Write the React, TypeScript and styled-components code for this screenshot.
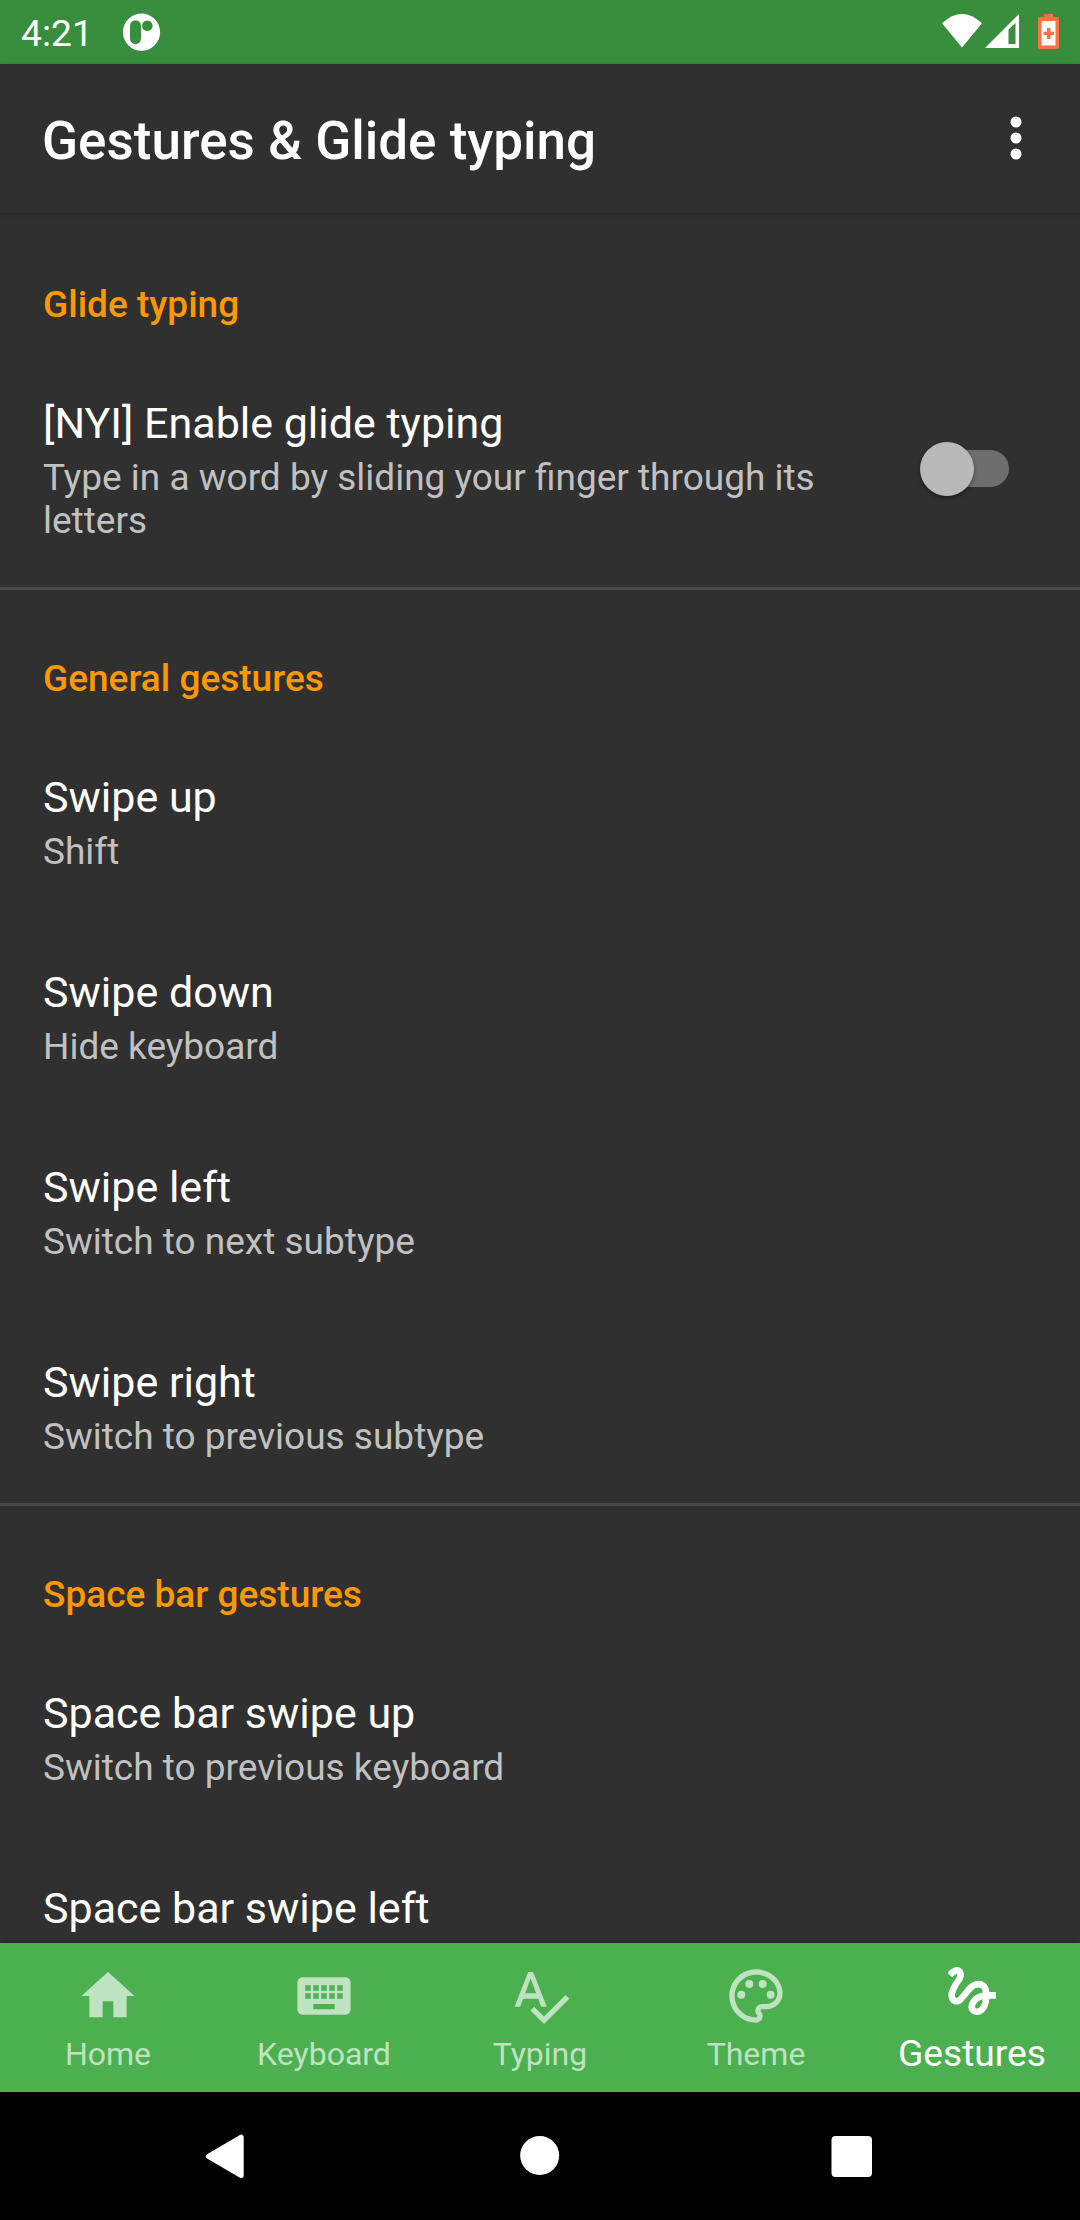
import React from "react";
import styled, { createGlobalStyle } from "styled-components";

const Global = createGlobalStyle`
  html, body { margin: 0; padding: 0; background: #303030; }
  * { box-sizing: border-box; }
`;

const Screen = styled.div`
  width: 1080px;
  height: 2220px;
  display: flex;
  flex-direction: column;
  overflow: hidden;
  background: #303030;
  color: #fff;
  font-family: Roboto, "Noto Sans", sans-serif;
`;

const StatusBar = styled.header`
  height: 64px;
  flex: none;
  display: flex;
  align-items: center;
  padding: 0 20px 0 21px;
  background: #388e3c;
`;

const Clock = styled.span`
  width: 101px;
  font-size: 37.3px;
  line-height: 44px;
  padding-top: 2px;
`;

const StatusIcons = styled.div`
  margin-left: auto;
  display: flex;
`;

const AppBar = styled.div`
  height: 149px;
  flex: none;
  display: flex;
  align-items: center;
  justify-content: space-between;
  padding: 0 42px;
  box-shadow: 0 1px 4px rgba(0, 0, 0, 0.25);
`;

const PageTitle = styled.h1`
  margin: 0;
  padding-top: 4px;
  font-size: 53px;
  line-height: 62px;
  font-weight: 500;
`;

const MenuButton = styled.button`
  display: flex;
  padding: 0;
  border: 0;
  background: none;
`;

const Content = styled.main`
  flex: 1;
  min-height: 0;
  overflow: hidden;
`;

const Section = styled.section<{ $first?: boolean }>`
  border-top: 3px solid ${(p) => (p.$first ? "transparent" : "#4a4a4a")};
`;

const SectionTitle = styled.h2`
  height: 133px;
  margin: 0;
  padding: 67px 43px 0;
  color: #ff9800;
  font-size: 37px;
  line-height: 44px;
  font-weight: 500;
`;

const Row = styled.div`
  display: flex;
  align-items: center;
  justify-content: space-between;
  padding: 49px 71px 45px 43px;
`;

const RowText = styled.div`
  display: flex;
  flex-direction: column;
  gap: 8px;
  max-width: 800px;
`;

const RowTitle = styled.span`
  font-size: 43px;
  line-height: 50px;
`;

const RowSummary = styled.span`
  font-size: 37px;
  line-height: 43px;
  color: #c1c1c1;
`;

const Track = styled.div`
  width: 86px;
  height: 37px;
  margin-bottom: 3px;
  display: flex;
  align-items: center;
  border-radius: 19px;
  background: #6e6e6e;
`;

const Thumb = styled.div`
  width: 54px;
  height: 54px;
  flex: none;
  margin-left: -3px;
  border-radius: 50%;
  background: #b9b9b9;
  box-shadow: 0 2px 4px rgba(0, 0, 0, 0.4);
`;

const BottomNav = styled.nav`
  height: 149px;
  flex: none;
  display: grid;
  grid-template-columns: repeat(5, 1fr);
  background: #4caf50;
  box-shadow: 0 -1px 6px rgba(0, 0, 0, 0.25);
`;

const Tab = styled.a<{ $active?: boolean }>`
  display: flex;
  flex-direction: column;
  align-items: center;
  justify-content: space-between;
  padding: ${(p) => (p.$active ? "16px 0 17px" : "21px 0 19px")};
  color: ${(p) => (p.$active ? "#fff" : "#bfe2c0")};
  font-size: ${(p) => (p.$active ? "37.2px" : "32px")};
  line-height: ${(p) => (p.$active ? "44px" : "38px")};
`;

const SystemNav = styled.div`
  height: 128px;
  flex: none;
  display: flex;
  align-items: center;
  justify-content: space-between;
  padding: 0 196px;
  background: #000;
`;

const Glyph = ({ d, size = 64 }: { d: string; size?: number }) => (
  <svg width={size} height={size} viewBox="0 0 24 24" fill="currentColor">
    <path d={d} fillRule="evenodd" />
  </svg>
);

const icons = {
  home: "M10 20v-6h4v6h5v-8h3L12 3 2 12h3v8z",
  keyboard:
    "M20 5H4c-1.1 0-1.99.9-1.99 2L2 17c0 1.1.9 2 2 2h16c1.1 0 2-.9 2-2V7c0-1.1-.9-2-2-2zm-9 3h2v2h-2V8zm0 3h2v2h-2v-2zM8 8h2v2H8V8zm0 3h2v2H8v-2zm-1 2H5v-2h2v2zm0-3H5V8h2v2zm9 7H8v-2h8v2zm0-4h-2v-2h2v2zm0-3h-2V8h2v2zm3 3h-2v-2h2v2zm0-3h-2V8h2v2z",
  typing:
    "M12.45 16h2.09L9.43 3H7.57L2.46 16h2.09l1.12-3h5.64l1.14 3zm-6.02-5L8.5 5.48 10.57 11H6.43zm15.16.59l-8.09 8.09L9.83 16l-1.41 1.41 5.09 5.09L23 13l-1.41-1.41z",
  theme:
    "M12 22C6.49 22 2 17.51 2 12S6.49 2 12 2s10 4.04 10 9c0 3.31-2.69 6-6 6h-1.77c-.28 0-.5.22-.5.5 0 .12.05.23.13.33.41.47.64 1.06.64 1.67A2.5 2.5 0 0112 22zm0-18c-4.41 0-8 3.59-8 8s3.59 8 8 8c.28 0 .5-.22.5-.5a.54.54 0 00-.14-.35c-.41-.46-.63-1.05-.63-1.65a2.5 2.5 0 012.5-2.5H16c2.21 0 4-1.79 4-4 0-3.86-3.59-7-8-7zM5 11.5a1.5 1.5 0 103 0a1.5 1.5 0 10-3 0zM8 7.5a1.5 1.5 0 103 0a1.5 1.5 0 10-3 0zM13 7.5a1.5 1.5 0 103 0a1.5 1.5 0 10-3 0zM16 11.5a1.5 1.5 0 103 0a1.5 1.5 0 10-3 0z",
  gesture:
    "M4.59 6.89c.7-.71 1.4-1.35 1.71-1.22.5.2 0 1.03-.3 1.52-.25.42-2.86 3.89-2.86 6.31 0 1.28.48 2.34 1.34 2.98.75.56 1.74.73 2.64.46 1.07-.31 1.95-1.4 3.06-2.77 1.21-1.49 2.83-3.44 4.08-3.44 1.63 0 1.65 1.01 1.76 1.79-3.78.64-5.38 3.67-5.38 5.37 0 1.7 1.44 3.09 3.21 3.09 1.63 0 4.29-1.33 4.69-6.1H21v-2.5h-2.47c-.15-1.65-1.09-4.2-4.03-4.2-2.25 0-4.18 1.91-4.94 2.84-.58.73-2.06 2.48-2.29 2.72-.25.3-.68.84-1.11.84-.45 0-.72-.83-.36-1.92.35-1.09 1.4-2.86 1.85-3.52.78-1.14 1.3-1.92 1.3-3.28C8.95 3.69 7.31 3 6.44 3 5.12 3 3.97 4 3.72 4.25c-.36.36-.66.66-.88.93l1.75 1.71zm9.29 11.66c-.31 0-.74-.26-.74-.72 0-.6.73-2.2 2.87-2.76-.3 2.69-1.43 3.48-2.13 3.48z",
};

const tabs = [
  { label: "Home", icon: icons.home },
  { label: "Keyboard", icon: icons.keyboard },
  { label: "Typing", icon: icons.typing },
  { label: "Theme", icon: icons.theme },
  { label: "Gestures", icon: icons.gesture, active: true },
];

type Pref = { title: string; summary: string; toggle?: boolean };

const sections: { title: string; rows: Pref[] }[] = [
  {
    title: "Glide typing",
    rows: [
      {
        title: "[NYI] Enable glide typing",
        summary: "Type in a word by sliding your finger through its letters",
        toggle: true,
      },
    ],
  },
  {
    title: "General gestures",
    rows: [
      { title: "Swipe up", summary: "Shift" },
      { title: "Swipe down", summary: "Hide keyboard" },
      { title: "Swipe left", summary: "Switch to next subtype" },
      { title: "Swipe right", summary: "Switch to previous subtype" },
    ],
  },
  {
    title: "Space bar gestures",
    rows: [
      { title: "Space bar swipe up", summary: "Switch to previous keyboard" },
      { title: "Space bar swipe left", summary: "" },
    ],
  },
];

export default function App() {
  return (
    <Screen>
      <Global />
      <StatusBar>
        <Clock>4:21</Clock>
        <svg width="39" height="38" viewBox="0 0 39 38">
          <circle cx="19.500" cy="19.200" r="18.600" fill="#fff" />
          <rect x="8" y="7.200" width="11" height="24" rx="5.500" fill="#388e3c" />
          <circle cx="25.300" cy="12.700" r="5.300" fill="#388e3c" />
        </svg>
        <StatusIcons>
          <svg width="120" height="64" viewBox="0 0 120 64">
            <path d="M2 23.300Q22 4.700 42 23.300L22 47.500z" fill="#fff" />
            <path d="M45 48L79 14v34z" fill="#fff" />
            <path d="M68.500 29.500L75.500 23v21h-7z" fill="#388e3c" />
            <path d="M104 14h9v3h4a2 2 0 012 2v28a2 2 0 01-2 2h-17a2 2 0 01-2-2V19a2 2 0 012-2h4z" fill="#ff7043" />
            <path d="M101.500 21h14v24.500h-14z" fill="#fff" />
            <path d="M107 28h3.500v3.700h3.500v3.300h-3.500v4h-3.500v-4h-3.500v-3.300h3.500z" fill="#ff7043" />
          </svg>
        </StatusIcons>
      </StatusBar>
      <AppBar>
        <PageTitle>Gestures &amp; Glide typing</PageTitle>
        <MenuButton aria-label="More options">
          <svg width="44" height="45" viewBox="0 0 44 45" fill="#fff">
            <circle cx="22" cy="6" r="5.500" />
            <circle cx="22" cy="22" r="5.500" />
            <circle cx="22" cy="38" r="5.500" />
          </svg>
        </MenuButton>
      </AppBar>
      <Content>
        {sections.map((s, i) => (
          <Section key={s.title} $first={i === 0}>
            <SectionTitle>{s.title}</SectionTitle>
            {s.rows.map((r) => (
              <Row key={r.title}>
                <RowText>
                  <RowTitle>{r.title}</RowTitle>
                  {r.summary && <RowSummary>{r.summary}</RowSummary>}
                </RowText>
                {r.toggle && (
                  <Track role="switch" aria-checked="false">
                    <Thumb />
                  </Track>
                )}
              </Row>
            ))}
          </Section>
        ))}
      </Content>
      <BottomNav>
        {tabs.map((t) => (
          <Tab key={t.label} $active={t.active}>
            <Glyph d={t.icon} />
            {t.label}
          </Tab>
        ))}
      </BottomNav>
      <SystemNav>
        <svg width="56" height="56" viewBox="0 0 56 56">
          <path d="M12.300 28.300L45.200 9.200V47.500z" fill="#fff" stroke="#fff" strokeWidth="5" strokeLinejoin="round" />
        </svg>
        <svg width="40" height="40" viewBox="0 0 40 40">
          <circle cx="19.700" cy="19.500" r="19.500" fill="#fff" />
        </svg>
        <svg width="56" height="56" viewBox="0 0 56 56">
          <rect x="3.500" y="8" width="40.500" height="41" rx="4" fill="#fff" />
        </svg>
      </SystemNav>
    </Screen>
  );
}
